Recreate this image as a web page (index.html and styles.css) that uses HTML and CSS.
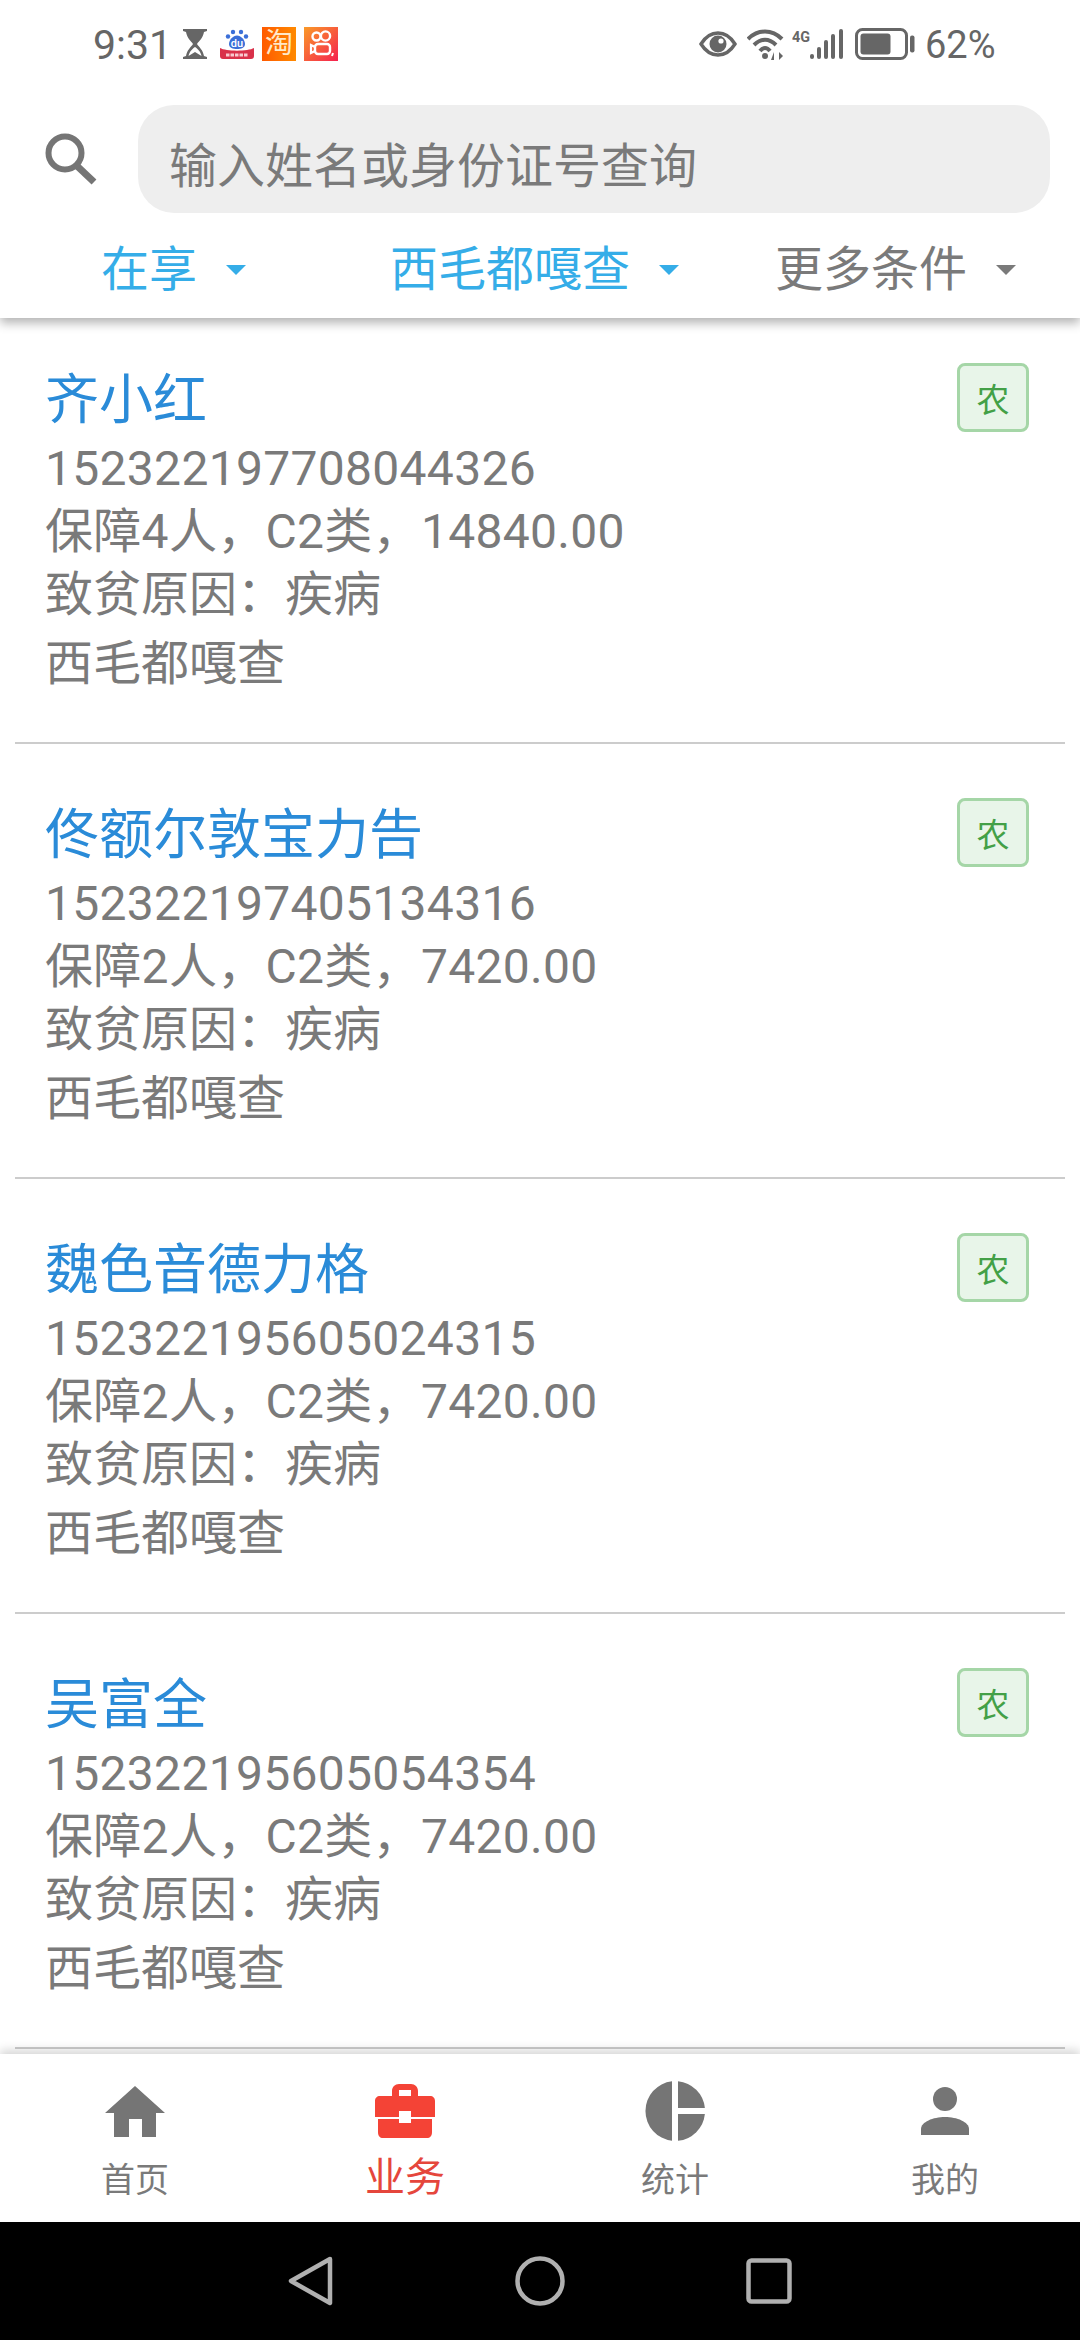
FILE: index.html
```html
<!DOCTYPE html>
<html lang="zh-CN">
<head>
  <meta charset="UTF-8">
  <meta name="viewport" content="width=device-width, initial-scale=1.0">
  <title>业务</title>
  <link rel="stylesheet" href="styles.css">
</head>
<body>
  <div class="page">

    <header class="header">
      <div class="status-bar">
        <div class="status-left">
          <span class="clock">9:31</span>
          <svg class="ic-hourglass" width="24" height="30" viewBox="0 0 24 30">
            <path d="M0 0H24V2L21 3C20 9 16 12 14 15C16 18 20 21 21 27L24 28V30H0V28L3 27C4 21 8 18 10 15C8 12 4 9 3 3L0 2Z" fill="#666"/>
            <path d="M5.5 27C6.5 22 10 19.5 12 18C14 19.5 17.5 22 18.5 27L12 23Z" fill="#fff"/>
          </svg>
          <svg class="ic-app" width="34" height="30" viewBox="0 0 34 30">
            <circle cx="13" cy="3" r="2.2" fill="#3b6fd8"/>
            <circle cx="21" cy="3" r="2.2" fill="#3b6fd8"/>
            <circle cx="8" cy="7.5" r="2.2" fill="#3b6fd8"/>
            <circle cx="26" cy="7.5" r="2.2" fill="#3b6fd8"/>
            <path d="M17 6.5C21 6.5 25 11 25 15C25 19 21 20 17 20C13 20 9 19 9 15C9 11 13 6.5 17 6.5Z" fill="#3b6fd8"/>
            <text x="17" y="18" font-size="11" font-family="Roboto, sans-serif" font-weight="500" fill="#fff" text-anchor="middle">du</text>
            <path d="M0 19C6 22.5 28 22.5 34 19V27C34 29 33 30 31 30H3C1 30 0 29 0 27Z" fill="#d9314a"/>
            <path d="M6 26H28" stroke="#f8c9cf" stroke-width="3" stroke-dasharray="3.5 1"/>
          </svg>
          <span class="app-tile app-taobao">淘</span>
          <svg class="ic-app" width="34" height="34" viewBox="0 0 34 34">
            <defs>
              <linearGradient id="ksGrad" x1="0" y1="0" x2="1" y2="1">
                <stop offset="0" stop-color="#fa9a28"/>
                <stop offset="1" stop-color="#f5224f"/>
              </linearGradient>
            </defs>
            <rect width="34" height="34" fill="url(#ksGrad)"/>
            <circle cx="12.5" cy="9.5" r="4" fill="none" stroke="#fff" stroke-width="2.4"/>
            <circle cx="21.5" cy="9" r="4.6" fill="none" stroke="#fff" stroke-width="2.4"/>
            <rect x="11" y="17" width="15" height="10" rx="3" fill="none" stroke="#fff" stroke-width="2.4"/>
            <path d="M11 20L7 18V26L11 24" fill="none" stroke="#fff" stroke-width="2.2"/>
            <path d="M29 26L28 29" stroke="#fff" stroke-width="2"/>
          </svg>
        </div>
        <div class="status-right">
          <svg class="ic-eye" width="38" height="26" viewBox="0 0 38 26">
            <path d="M2 13C7 5 13 2 19 2C25 2 31 5 36 13C31 21 25 24 19 24C13 24 7 21 2 13Z" fill="#fff" stroke="#666" stroke-width="3.4"/>
            <circle cx="19" cy="13" r="8.5" fill="#666"/>
            <circle cx="22" cy="10" r="2.6" fill="#fff"/>
          </svg>
          <svg class="ic-wifi" width="38" height="32" viewBox="0 0 38 32">
            <path d="M1 11C11 1 25 1 35 11" fill="none" stroke="#666" stroke-width="4"/>
            <path d="M7 17C14 10 22 10 29 17" fill="none" stroke="#666" stroke-width="4"/>
            <path d="M13 23C16 19 20 19 23 23" fill="none" stroke="#666" stroke-width="4"/>
            <circle cx="18" cy="28" r="3" fill="#666"/>
            <path d="M27 32V24L24 32ZM32 24V32L36 28Z" fill="#666"/>
          </svg>
          <svg class="ic-signal" width="52" height="32" viewBox="0 0 52 32">
            <text x="0" y="14" font-size="15" font-weight="700" font-family="Roboto, sans-serif" fill="#666" textLength="18" lengthAdjust="spacingAndGlyphs">4G</text>
            <rect x="18" y="26" width="4" height="5" rx="2" fill="#666"/>
            <rect x="25" y="19" width="4" height="12" rx="2" fill="#666"/>
            <rect x="32" y="12" width="4" height="19" rx="2" fill="#666"/>
            <rect x="39" y="6" width="4" height="25" rx="2" fill="#666"/>
            <rect x="47" y="1" width="4" height="30" rx="2" fill="#666"/>
          </svg>
          <svg class="ic-battery" width="60" height="32" viewBox="0 0 60 32">
            <rect x="1.5" y="1.5" width="50" height="29" rx="6" fill="none" stroke="#666" stroke-width="3"/>
            <rect x="5.5" y="5.5" width="30" height="21" rx="3" fill="#666"/>
            <rect x="55" y="7.5" width="4.5" height="17" rx="2" fill="#666"/>
          </svg>
          <span class="battery-text">62%</span>
        </div>
      </div>

      <div class="search-row">
        <svg class="ic-search" width="52" height="52" viewBox="0 0 52 52">
          <circle cx="20" cy="20" r="16.5" fill="none" stroke="#757575" stroke-width="6"/>
          <path d="M31 32L49 49" stroke="#757575" stroke-width="7" fill="none"/>
        </svg>
        <div class="search-box">输入姓名或身份证号查询</div>
      </div>

      <div class="filter-row">
        <div class="filter active">在享<span class="caret"></span></div>
        <div class="filter active">西毛都嘎查<span class="caret"></span></div>
        <div class="filter">更多条件<span class="caret"></span></div>
      </div>
    </header>

    <main class="list">
      <div class="cell">
        <div class="cell-info">
          <div class="name">齐小红</div>
          <div class="line spaced">152322197708044326</div>
          <div class="line spaced">保障4人，C2类，14840.00</div>
          <div class="line">致贫原因：疾病</div>
          <div class="line village">西毛都嘎查</div>
        </div>
        <span class="tag">农</span>
      </div>
      <div class="cell">
        <div class="cell-info">
          <div class="name">佟额尔敦宝力告</div>
          <div class="line spaced">152322197405134316</div>
          <div class="line spaced">保障2人，C2类，7420.00</div>
          <div class="line">致贫原因：疾病</div>
          <div class="line village">西毛都嘎查</div>
        </div>
        <span class="tag">农</span>
      </div>
      <div class="cell">
        <div class="cell-info">
          <div class="name">魏色音德力格</div>
          <div class="line spaced">152322195605024315</div>
          <div class="line spaced">保障2人，C2类，7420.00</div>
          <div class="line">致贫原因：疾病</div>
          <div class="line village">西毛都嘎查</div>
        </div>
        <span class="tag">农</span>
      </div>
      <div class="cell">
        <div class="cell-info">
          <div class="name">吴富全</div>
          <div class="line spaced">152322195605054354</div>
          <div class="line spaced">保障2人，C2类，7420.00</div>
          <div class="line">致贫原因：疾病</div>
          <div class="line village">西毛都嘎查</div>
        </div>
        <span class="tag">农</span>
      </div>
    </main>

    <nav class="tabbar">
      <div class="tab">
        <div class="tab-icon">
          <svg width="60" height="51" viewBox="0 0 60 51">
            <path d="M30 0L60 27H51V51H37V33H24V51H9V27H0Z" fill="#757575"/>
          </svg>
        </div>
        <span class="tab-label">首页</span>
      </div>
      <div class="tab active">
        <div class="tab-icon">
          <svg width="60" height="54" viewBox="0 0 60 54">
            <path d="M17 13V7C17 3 20 0 24 0H36C40 0 43 3 43 7V13H36V6H24V13Z" fill="#f44336"/>
            <path d="M5 12H55C58 12 60 14 60 17V33H36V27H24V33H0V17C0 14 2 12 5 12Z" fill="#f44336"/>
            <path d="M3 35H24V39H36V35H57V48C57 52 55 54 52 54H8C5 54 3 52 3 48Z" fill="#f44336"/>
          </svg>
        </div>
        <span class="tab-label">业务</span>
      </div>
      <div class="tab">
        <div class="tab-icon">
          <svg width="60" height="60" viewBox="0 0 60 60">
            <path d="M27 0.2A30 30 0 0 0 27 59.8Z" fill="#757575"/>
            <path d="M33 0.2A30 30 0 0 1 59.9 27H33Z" fill="#757575"/>
            <path d="M33 59.8A30 30 0 0 0 59.9 33H33Z" fill="#757575"/>
          </svg>
        </div>
        <span class="tab-label">统计</span>
      </div>
      <div class="tab">
        <div class="tab-icon">
          <svg width="48" height="48" viewBox="0 0 48 48">
            <circle cx="24" cy="12" r="12" fill="#757575"/>
            <path d="M0 48V42C0 35 12 30 24 30C36 30 48 35 48 42V48Z" fill="#757575"/>
          </svg>
        </div>
        <span class="tab-label">我的</span>
      </div>
    </nav>

    <div class="navbar">
      <svg width="46" height="50" viewBox="0 0 46 50">
        <path d="M42 3L3 25L42 47Z" fill="none" stroke="#b0b0b0" stroke-width="4.5" stroke-linejoin="round"/>
      </svg>
      <svg width="50" height="50" viewBox="0 0 50 50">
        <circle cx="25" cy="25" r="22.5" fill="none" stroke="#b0b0b0" stroke-width="4.5"/>
      </svg>
      <svg width="46" height="46" viewBox="0 0 46 46">
        <rect x="2.5" y="2.5" width="41" height="41" rx="3" fill="none" stroke="#b0b0b0" stroke-width="4.5"/>
      </svg>
    </div>

  </div>
</body>
</html>
```

FILE: styles.css
```css
* { box-sizing: border-box; }

html, body {
  margin: 0;
  padding: 0;
  background-color: #fff;
}

body {
  font-family: Roboto, "Noto Sans CJK SC", sans-serif;
  color: #7a7a7a;
}

.page {
  width: 1080px;
  height: 2340px;
  display: flex;
  flex-direction: column;
  overflow: hidden;
}

/* top block */
.header {
  position: relative;
  z-index: 2;
  height: 318px;
  flex-shrink: 0;
  background-color: #fff;
  box-shadow: 0 5px 10px rgba(0, 0, 0, 0.3);
}

.status-bar {
  height: 90px;
  padding: 0 87px 2px 93px;
  display: flex;
  justify-content: space-between;
  align-items: center;
  color: #666;
}

.status-left, .status-right {
  display: flex;
  align-items: center;
}

.clock {
  font-size: 41px;
  line-height: 46px;
  width: 72px;
  margin-top: 2px;
}

.ic-hourglass { margin-left: 18px; }
.status-left .ic-app { margin-left: 8px; }
.status-left .ic-hourglass + .ic-app { margin-left: 13px; }

.app-tile {
  width: 34px;
  height: 34px;
  margin-left: 8px;
  display: flex;
  justify-content: center;
  align-items: center;
  font-size: 28px;
  line-height: 34px;
}

.app-taobao {
  background: linear-gradient(90deg, #ff5a00, #ff8a00);
  color: #ffe9c8;
}

.ic-eye { margin-right: 10px; }
.ic-wifi { margin-right: 7px; }
.ic-signal { margin-right: 11px; }
.ic-battery { margin-right: 10px; }

.battery-text {
  width: 68px;
  font-size: 38px;
  line-height: 46px;
  margin-top: 2px;
}

.search-row {
  margin-top: 15px;
  height: 108px;
  padding: 0 30px 0 45px;
  display: flex;
  align-items: center;
}

.ic-search { flex-shrink: 0; }

.search-box {
  flex: 1;
  height: 108px;
  margin-left: 41px;
  padding: 6px 0 0 31px;
  background-color: #eee;
  border-radius: 36px;
  display: flex;
  align-items: center;
  font-size: 48px;
  color: #7a7a7a;
}

.filter-row {
  height: 105px;
  padding: 8px 0 0 101px;
  display: grid;
  grid-template-columns: 289px 385px 1fr;
  align-items: center;
}

.filter {
  display: flex;
  align-items: center;
  font-size: 48px;
  line-height: 60px;
  color: #7a7a7a;
}

.filter.active { color: #35ade8; }

.caret {
  width: 0;
  height: 0;
  margin-left: 29px;
  margin-top: 1px;
  border-left: 10px solid transparent;
  border-right: 10px solid transparent;
  border-top: 10px solid currentColor;
}

/* list */
.list {
  flex: 1;
  min-height: 0;
  margin-top: -9px;
  overflow: hidden;
}

.cell {
  height: 435px;
  margin: 0 15px;
  padding: 56px 36px 0 30px;
  border-bottom: 2px solid #ccc;
  display: flex;
  justify-content: space-between;
  align-items: flex-start;
}

.name {
  font-size: 54px;
  line-height: 72px;
  color: #2a8bd8;
}

.line {
  font-size: 48px;
  line-height: 63px;
  color: #7a7a7a;
}

.line.spaced { letter-spacing: 0.3px; }

.line.village { margin-top: 6px; }

.tag {
  width: 72px;
  height: 69px;
  margin-top: -2px;
  background-color: #e8f5e9;
  border: 3px solid #a5d6a7;
  border-radius: 8px;
  display: flex;
  justify-content: center;
  align-items: center;
  font-size: 33px;
  color: #43a047;
}

/* bottom tabs */
.tabbar {
  position: relative;
  z-index: 2;
  height: 168px;
  flex-shrink: 0;
  background-color: #fff;
  display: flex;
  box-shadow: 0 -4px 9px rgba(0, 0, 0, 0.16);
}

.tab {
  flex: 1;
  display: flex;
  flex-direction: column;
  align-items: center;
  padding-top: 27px;
}

.tab-icon {
  height: 60px;
  display: flex;
  align-items: center;
  justify-content: center;
}

.tab-label {
  margin-top: 15px;
  font-size: 34px;
  line-height: 48px;
  color: #7a7a7a;
}

.tab.active .tab-label {
  margin-top: 13px;
  font-size: 40px;
  color: #e5463c;
}

.navbar {
  height: 118px;
  flex-shrink: 0;
  background-color: #000;
  display: flex;
  justify-content: center;
  align-items: center;
  gap: 181px;
}
```
